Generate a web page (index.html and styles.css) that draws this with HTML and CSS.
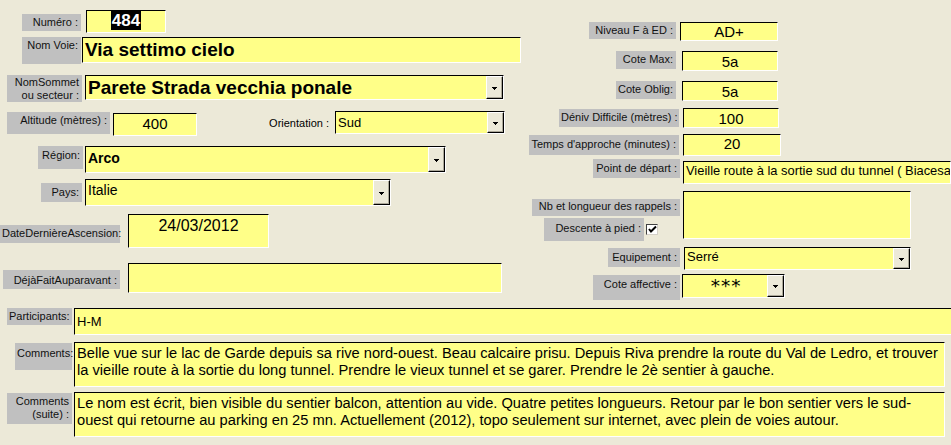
FILE: index.html
```html
<!DOCTYPE html>
<html lang="fr">
<head>
  <meta charset="UTF-8">
  <title>Voies - Fiche</title>
  <link rel="stylesheet" href="styles.css">
</head>
<body>
  <div class="top">
    <!-- Left: route identity -->
    <div class="col-left">
      <div class="row r-num">
        <span class="lbl l-num">Numéro :</span>
        <div class="fld f-num"><span class="sel">484</span></div>
      </div>
      <div class="row r-voie">
        <span class="lbl l-voie">Nom Voie:</span>
        <div class="fld f-voie">Via settimo cielo</div>
      </div>
      <div class="row r-som">
        <span class="lbl l-som">NomSommet<br>ou secteur :</span>
        <div class="fld dd f-som">
          <span class="val">Parete Strada vecchia ponale</span>
          <span class="btn"><svg width="5" height="3"><rect x="0" y="0" width="5" height="1"/><rect x="1" y="1" width="3" height="1"/><rect x="2" y="2" width="1" height="1"/></svg></span>
        </div>
      </div>
      <div class="row r-alt">
        <span class="lbl l-alt">Altitude (mètres) :</span>
        <div class="fld f-alt">400</div>
        <span class="l-ori">Orientation :</span>
        <div class="fld dd f-ori">
          <span class="val">Sud</span>
          <span class="btn"><svg width="5" height="3"><rect x="0" y="0" width="5" height="1"/><rect x="1" y="1" width="3" height="1"/><rect x="2" y="2" width="1" height="1"/></svg></span>
        </div>
      </div>
      <div class="row r-reg">
        <span class="lbl l-reg">Région:</span>
        <div class="fld dd f-reg">
          <span class="val">Arco</span>
          <span class="btn"><svg width="5" height="3"><rect x="0" y="0" width="5" height="1"/><rect x="1" y="1" width="3" height="1"/><rect x="2" y="2" width="1" height="1"/></svg></span>
        </div>
      </div>
      <div class="row r-pays">
        <span class="lbl l-pays">Pays:</span>
        <div class="fld dd f-pays">
          <span class="val">Italie</span>
          <span class="btn"><svg width="5" height="3"><rect x="0" y="0" width="5" height="1"/><rect x="1" y="1" width="3" height="1"/><rect x="2" y="2" width="1" height="1"/></svg></span>
        </div>
      </div>
      <div class="row r-date">
        <span class="lbl l-date">DateDernièreAscension:</span>
        <div class="fld f-date">24/03/2012</div>
      </div>
      <div class="row r-deja">
        <span class="lbl l-deja">DéjàFaitAuparavant :</span>
        <div class="fld f-deja"></div>
      </div>
    </div>

    <!-- Right: grades and access -->
    <div class="col-right">
      <div class="row r-niv">
        <span class="lbl l-niv">Niveau F à ED :</span>
        <div class="fld num f-niv">AD+</div>
      </div>
      <div class="row r-cmax">
        <span class="lbl l-cote">Cote Max:</span>
        <div class="fld num f-cote">5a</div>
      </div>
      <div class="row r-cobl">
        <span class="lbl l-cote">Cote Oblig:</span>
        <div class="fld num f-cote">5a</div>
      </div>
      <div class="row r-deniv">
        <span class="lbl l-deniv">Déniv Difficile (mètres) :</span>
        <div class="fld num f-deniv">100</div>
      </div>
      <div class="row r-temps">
        <span class="lbl l-temps">Temps d'approche (minutes) :</span>
        <div class="fld num f-temps">20</div>
      </div>
      <div class="row r-pt">
        <span class="lbl l-pt">Point de départ :</span>
        <div class="fld f-pt">Vieille route à la sortie sud du tunnel ( Biacesa</div>
      </div>
      <div class="row r-rap">
        <div class="stack">
          <span class="lbl l-rap">Nb et longueur des rappels :</span>
          <div class="desc">
            <span class="lbl l-desc">Descente à pied :</span>
            <span class="chk"><svg width="9" height="9" viewBox="0 0 9 9"><path d="M1 4 L3 6.5 L8 1.5" fill="none" stroke="#000" stroke-width="2"/></svg></span>
          </div>
        </div>
        <div class="fld f-rap"></div>
      </div>
      <div class="row r-equip">
        <span class="lbl l-equip">Equipement :</span>
        <div class="fld dd f-equip">
          <span class="val">Serré</span>
          <span class="btn"><svg width="5" height="3"><rect x="0" y="0" width="5" height="1"/><rect x="1" y="1" width="3" height="1"/><rect x="2" y="2" width="1" height="1"/></svg></span>
        </div>
      </div>
      <div class="row r-caff">
        <span class="lbl l-caff">Cote affective :</span>
        <div class="fld dd f-caff">
          <span class="val">***</span>
          <span class="btn"><svg width="5" height="3"><rect x="0" y="0" width="5" height="1"/><rect x="1" y="1" width="3" height="1"/><rect x="2" y="2" width="1" height="1"/></svg></span>
        </div>
      </div>
    </div>
  </div>

  <!-- Bottom: free text -->
  <div class="bottom">
    <div class="row r-part">
      <span class="lbl l-part">Participants:</span>
      <div class="fld f-part">H-M</div>
    </div>
    <div class="row r-com">
      <span class="lbl l-com">Comments:</span>
      <div class="fld memo">Belle vue sur le lac de Garde depuis sa rive nord-ouest. Beau calcaire prisu. Depuis Riva prendre la route du Val de Ledro, et trouver la vieille route à la sortie du long tunnel. Prendre le vieux tunnel et se garer. Prendre le 2è sentier à gauche.</div>
    </div>
    <div class="row r-com2">
      <span class="lbl l-com2">Comments<br>(suite) :</span>
      <div class="fld memo">Le nom est écrit, bien visible du sentier balcon, attention au vide. Quatre petites longueurs. Retour par le bon sentier vers le sud-ouest qui retourne au parking en 25 mn. Actuellement (2012), topo seulement sur internet, avec plein de voies autour.</div>
    </div>
  </div>
</body>
</html>
```

FILE: styles.css
```css
* { box-sizing: border-box; }
body { margin: 0; width: 951px; height: 445px; overflow: hidden; background: #ece9d8; color: #000; font-family: "Liberation Sans", Arial, sans-serif; font-size: 11px; }

.top { display: flex; height: 308px; }
.col-left { width: 525px; flex: none; }
.col-right { flex: 1; }
.row { display: flex; align-items: flex-start; }

/* grey Access labels */
.lbl { flex: none; background: #c0c0c0; color: #111; text-align: right; padding: 2px 3px 0 2px; line-height: 13px; white-space: nowrap; }

/* yellow sunken text boxes */
.fld { flex: none; background: #ffff88; border: 1px solid; border-color: #000 #fff #fff #000; overflow: hidden; white-space: nowrap; font-size: 13px; line-height: 16px; padding: 0 2px; }
.fld.num { text-align: center; font-size: 15px; line-height: 17px; }
.dd { display: flex; padding: 0; }
.dd .val { flex: 1; padding-left: 2px; overflow: hidden; }
.btn { flex: none; width: 17px; display: flex; align-items: center; justify-content: center; padding-top: 1px; background: #ece9d8; border: 1px solid; border-color: #fff #000 #000 #fff; box-shadow: inset -1px -1px #aca899; }
.btn svg { display: block; fill: #000; }

/* left column */
.r-num { margin-top: 10px; }
.l-num { margin: 4px 0 0 22px; width: 59px; height: 17px; }
.f-num { margin-left: 5px; width: 80px; height: 23px; text-align: center; font-weight: bold; font-size: 17px; line-height: 20px; }
.sel { background: #000; color: #fff; padding: 0 1px; }

.r-voie { margin-top: 4px; }
.l-voie { margin-left: 22px; width: 59px; height: 27px; }
.f-voie { margin-left: 1px; width: 439px; height: 26px; font-weight: bold; font-size: 19px; line-height: 22px; padding-top: 1px; }

.r-som { margin-top: 11px; }
.l-som { margin-left: 7px; width: 75px; height: 27px; padding-top: 1px; }
.f-som { margin-left: 3px; width: 419px; height: 25px; font-weight: bold; font-size: 19px; line-height: 22px; }
.f-som .val { padding-top: 1px; }

.r-alt { margin-top: 9px; }
.l-alt { margin: 1px 0 0 7px; width: 103px; height: 22px; }
.f-alt { margin: 2px 0 0 3px; width: 84px; height: 23px; text-align: center; font-size: 15px; line-height: 17px; padding-top: 1px; }
.l-ori { flex: none; margin: 6px 0 0 69px; width: 67px; padding-right: 4px; text-align: right; line-height: 13px; white-space: nowrap; }
.f-ori { margin-left: 2px; width: 170px; height: 23px; font-size: 13px; }
.f-ori .val { padding-top: 3px; }

.r-reg { margin-top: 10px; }
.l-reg { margin-left: 38px; width: 45px; height: 23px; padding-top: 3px; }
.f-reg { margin-left: 2px; width: 361px; height: 27px; font-weight: bold; font-size: 14px; }
.f-reg .val { padding-top: 3px; }

.r-pays { margin-top: 6px; }
.l-pays { margin: 4px 0 0 41px; width: 41px; height: 19px; padding-top: 3px; }
.f-pays { margin-left: 3px; width: 306px; height: 27px; font-size: 14px; }
.f-pays .val { padding-top: 2px; }

.r-date { margin-top: 8px; }
.l-date { margin-top: 11px; width: 120px; height: 18px; }
.f-date { margin-left: 8px; width: 141px; height: 34px; text-align: center; font-size: 16px; line-height: 18px; padding-top: 2px; }

.r-deja { margin-top: 15px; }
.l-deja { margin: 7px 0 0 3px; width: 117px; height: 19px; padding-top: 4px; }
.f-deja { margin-left: 8px; width: 374px; height: 30px; }

/* right column */
.r-niv { margin-top: 22px; }
.l-niv { margin-left: 64px; width: 87px; height: 17px; }
.f-niv { margin-left: 4px; width: 98px; height: 19px; }

.r-cmax, .r-cobl { margin-top: 10px; }
.l-cote { margin-left: 91px; width: 60px; height: 18px; }
.f-cote { margin-left: 6px; width: 96px; height: 20px; padding-top: 1px; }

.r-deniv { margin-top: 7px; }
.l-deniv { margin: 1px 0 0 34px; width: 120px; height: 18px; }
.f-deniv { margin-left: 4px; width: 96px; height: 20px; padding-top: 1px; }

.r-temps { margin-top: 6px; }
.l-temps { margin: 1px 0 0 4px; width: 150px; height: 20px; padding-top: 3px; }
.f-temps { margin-left: 4px; width: 98px; height: 22px; }

.r-pt { margin-top: 3px; }
.l-pt { margin-left: 68px; width: 87px; height: 19px; padding-top: 3px; }
.f-pt { margin: 2px 0 0 3px; width: 268px; height: 23px; padding-top: 1px; font-size: 12.9px; }

.r-rap { margin-top: 7px; }
.stack { flex: none; width: 158px; display: flex; flex-direction: column; align-items: flex-end; }
.l-rap { margin: 8px 3px 0 0; width: 148px; height: 17px; padding-top: 1px; }
.desc { display: flex; align-items: flex-start; margin: 2px 25px 0 0; }
.l-desc { width: 100px; height: 23px; padding-top: 4px; }
.chk { flex: none; margin: 6px 0 0 2px; width: 12px; height: 11px; background: #fff; border: 1px solid; border-color: #404040 #d4d0c8 #d4d0c8 #404040; display: flex; align-items: center; justify-content: center; }
.chk svg { display: block; }
.f-rap { width: 228px; height: 48px; }

.r-equip { margin-top: 6px; }
.l-equip { margin: 1px 0 0 83px; width: 72px; height: 19px; padding-top: 3px; }
.f-equip { margin-left: 4px; width: 227px; height: 23px; font-size: 13px; }
.f-equip .val { padding-top: 1px; }

.r-caff { margin-top: 4px; }
.l-caff { margin: 1px 0 0 68px; width: 87px; height: 25px; padding-top: 3px; }
.f-caff { margin-left: 2px; width: 103px; height: 24px; }
.f-caff .val { text-align: center; font-family: "DejaVu Sans", sans-serif; font-size: 18.5px; line-height: 22px; letter-spacing: 1px; }

/* bottom */
.l-part { margin-left: 7px; width: 65px; height: 17px; }
.f-part { margin-left: 2px; width: 890px; height: 27px; padding-top: 5px; }

.r-com { margin-top: 7px; }
.l-com { margin: 1px 0 0 15px; width: 57px; height: 27px; padding-top: 4px; }
.memo { margin-left: 2px; width: 871px; height: 45px; white-space: normal; font-size: 14.67px; line-height: 17px; padding: 2px 2px 0; }

.r-com2 { margin-top: 5px; }
.l-com2 { margin: 1px 0 0 7px; width: 65px; height: 31px; padding-top: 2px; }
```
